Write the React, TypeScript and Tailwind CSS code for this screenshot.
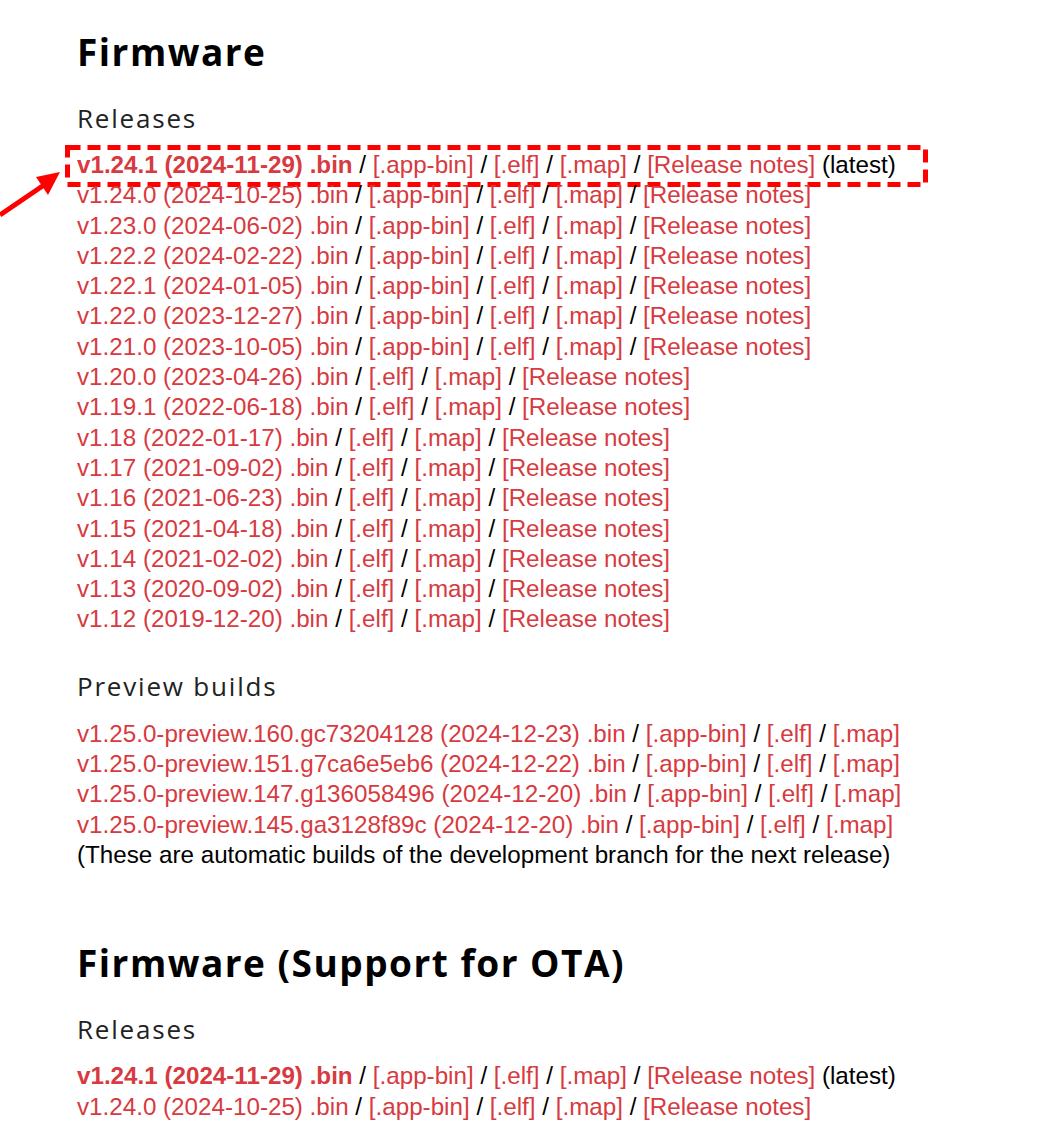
import React from "react";

type Row = { main: string; extras: string[]; bold?: boolean; latest?: boolean };

const linkColor = "text-[#d73a40]";

const releases: Row[] = [
  { main: "v1.24.1 (2024-11-29) .bin", extras: ["[.app-bin]", "[.elf]", "[.map]", "[Release notes]"], bold: true, latest: true },
  { main: "v1.24.0 (2024-10-25) .bin", extras: ["[.app-bin]", "[.elf]", "[.map]", "[Release notes]"] },
  { main: "v1.23.0 (2024-06-02) .bin", extras: ["[.app-bin]", "[.elf]", "[.map]", "[Release notes]"] },
  { main: "v1.22.2 (2024-02-22) .bin", extras: ["[.app-bin]", "[.elf]", "[.map]", "[Release notes]"] },
  { main: "v1.22.1 (2024-01-05) .bin", extras: ["[.app-bin]", "[.elf]", "[.map]", "[Release notes]"] },
  { main: "v1.22.0 (2023-12-27) .bin", extras: ["[.app-bin]", "[.elf]", "[.map]", "[Release notes]"] },
  { main: "v1.21.0 (2023-10-05) .bin", extras: ["[.app-bin]", "[.elf]", "[.map]", "[Release notes]"] },
  { main: "v1.20.0 (2023-04-26) .bin", extras: ["[.elf]", "[.map]", "[Release notes]"] },
  { main: "v1.19.1 (2022-06-18) .bin", extras: ["[.elf]", "[.map]", "[Release notes]"] },
  { main: "v1.18 (2022-01-17) .bin", extras: ["[.elf]", "[.map]", "[Release notes]"] },
  { main: "v1.17 (2021-09-02) .bin", extras: ["[.elf]", "[.map]", "[Release notes]"] },
  { main: "v1.16 (2021-06-23) .bin", extras: ["[.elf]", "[.map]", "[Release notes]"] },
  { main: "v1.15 (2021-04-18) .bin", extras: ["[.elf]", "[.map]", "[Release notes]"] },
  { main: "v1.14 (2021-02-02) .bin", extras: ["[.elf]", "[.map]", "[Release notes]"] },
  { main: "v1.13 (2020-09-02) .bin", extras: ["[.elf]", "[.map]", "[Release notes]"] },
  { main: "v1.12 (2019-12-20) .bin", extras: ["[.elf]", "[.map]", "[Release notes]"] },
];

const previews: Row[] = [
  { main: "v1.25.0-preview.160.gc73204128 (2024-12-23) .bin", extras: ["[.app-bin]", "[.elf]", "[.map]"] },
  { main: "v1.25.0-preview.151.g7ca6e5eb6 (2024-12-22) .bin", extras: ["[.app-bin]", "[.elf]", "[.map]"] },
  { main: "v1.25.0-preview.147.g136058496 (2024-12-20) .bin", extras: ["[.app-bin]", "[.elf]", "[.map]"] },
  { main: "v1.25.0-preview.145.ga3128f89c (2024-12-20) .bin", extras: ["[.app-bin]", "[.elf]", "[.map]"] },
];

const otaReleases: Row[] = [
  { main: "v1.24.1 (2024-11-29) .bin", extras: ["[.app-bin]", "[.elf]", "[.map]", "[Release notes]"], bold: true, latest: true },
  { main: "v1.24.0 (2024-10-25) .bin", extras: ["[.app-bin]", "[.elf]", "[.map]", "[Release notes]"] },
];

const headFont = { fontFamily: '"Open Sans", "DejaVu Sans", sans-serif' };

function FirmwareRow({ row, highlight }: { row: Row; highlight?: boolean }) {
  return (
    <div className="relative h-[30.3px] leading-[30.3px] whitespace-nowrap text-black">
      <a className={`${linkColor} ${row.bold ? "font-bold" : ""}`}>{row.main}</a>
      {row.extras.map((e) => (
        <React.Fragment key={e}>
          {" / "}
          <a className={linkColor}>{e}</a>
        </React.Fragment>
      ))}
      {row.latest && " (latest)"}
      {highlight && (
        <svg className="absolute left-[-12px] top-[-5px]" width="863" height="42">
          <rect x="2.5" y="2.5" width="858" height="37" fill="none" stroke="#ff0000" strokeWidth="5" strokeDasharray="13 7" />
        </svg>
      )}
    </div>
  );
}

function SubHeading({ children, className }: { children: React.ReactNode; className: string }) {
  return (
    <h3 className={`${className} text-[26px] leading-[32px] tracking-[1.8px] text-[#222]`} style={headFont}>
      {children}
    </h3>
  );
}

function Section({ title, sub, rows, first }: { title: string; sub: string; rows: Row[]; first?: boolean }) {
  return (
    <div>
      <h2 className="text-[37px] font-bold leading-[44px] text-black tracking-[1.5px]" style={headFont}>
        {title}
      </h2>
      <SubHeading className="mt-[28px]">{sub}</SubHeading>
      <div className="mt-[16px]">
        {rows.map((r, i) => (
          <FirmwareRow key={r.main} row={r} highlight={first && i === 0} />
        ))}
      </div>
    </div>
  );
}

export default function App() {
  return (
    <div className="relative bg-white w-[1046px] h-[1125px] overflow-hidden pl-[77px] pt-[30px] text-[24.2px]" style={{ fontFamily: '"Liberation Sans", Arial, sans-serif' }}>
      <svg className="absolute left-0 top-[165px]" width="70" height="60">
        <line x1="0" y1="50" x2="44" y2="20" stroke="#ff0000" strokeWidth="5" />
        <polygon points="60,7 36,12 48,30" fill="#ff0000" />
      </svg>

      <Section title="Firmware" sub="Releases" rows={releases} first />

      <SubHeading className="mt-[35px]">Preview builds</SubHeading>
      <div className="mt-[17px]">
        {previews.map((r) => (
          <FirmwareRow key={r.main} row={r} />
        ))}
        <div className="h-[30.3px] leading-[30.3px] whitespace-nowrap text-black">
          (These are automatic builds of the development branch for the next release)
        </div>
      </div>

      <div className="mt-[71px]">
        <Section title="Firmware (Support for OTA)" sub="Releases" rows={otaReleases} />
      </div>
    </div>
  );
}
